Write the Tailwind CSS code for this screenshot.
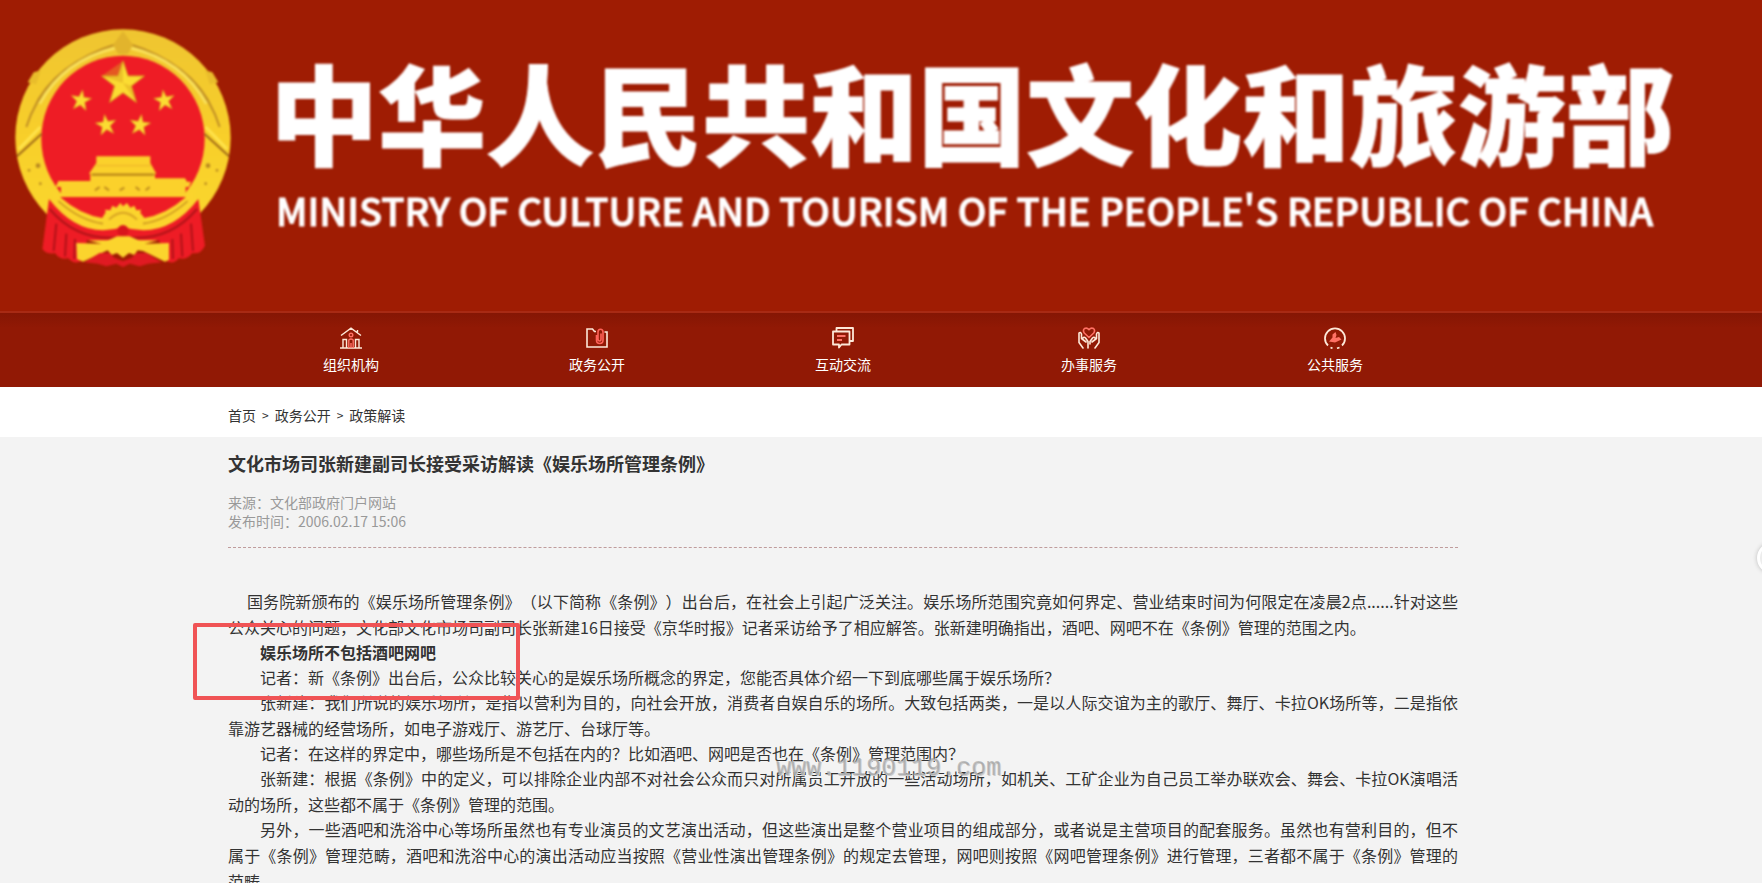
<!DOCTYPE html>
<html lang="zh-CN">
<head>
    <meta charset="UTF-8">
    <meta name="viewport" content="width=device-width, initial-scale=1.0">
    <title>文化市场司张新建副司长接受采访解读《娱乐场所管理条例》</title>
    <script src="https://cdn.jsdelivr.net/npm/@tailwindcss/browser@4"></script>
</head>
<body class="bg-[#f3f3f3] text-[#333] font-['Noto_Sans_CJK_SC',sans-serif] [text-spacing-trim:space-all] overflow-x-hidden">
    <!-- Banner -->
    <header class="bg-[#9f1c03] text-white flex items-start gap-[37px] pl-[13px] h-[313px] border-b-2 border-[#a82a14] whitespace-nowrap overflow-hidden">
        <svg class="mt-[27px] w-[220px] h-[242px] shrink-0 blur-[1px]" viewBox="40 50 660 726" role="img" aria-label="国徽">
            <defs>
                <linearGradient id="gold" x1="0" y1="0" x2="0" y2="1">
                    <stop offset="0" stop-color="#efc531"/>
                    <stop offset=".5" stop-color="#f8cf2a"/>
                    <stop offset="1" stop-color="#fbd92e"/>
                </linearGradient>
                <path id="star" d="M0-66 15-21 64-21 25 9 40 58 0 29-40 58-25 9-64-21-15-21Z"/>
            </defs>
            <!-- wheat ring -->
            <ellipse cx="370" cy="382" rx="323" ry="325" fill="url(#gold)"/>
            <path d="M84 216 102 186 124 180 110 222ZM656 216 638 186 616 180 630 222Z" fill="#e9bd2b"/>
            <path d="M100 300Q160 160 360 98M80 350Q130 190 300 128M640 300Q580 160 380 98M660 350Q610 190 440 128" fill="none" stroke="#c08f25" stroke-width="6"/>
            <path d="M120 280Q190 150 350 112M620 280Q550 150 390 112" fill="none" stroke="#f9e05a" stroke-width="9"/>
            <path d="M340 104 370 62 400 104 384 132H356Z" fill="#e2b42c"/>
            <!-- red field -->
            <ellipse cx="370" cy="386" rx="245" ry="250" fill="#ee1c25"/>
            <path d="M52 438 126 370M688 438 614 370" stroke="#a06a18" stroke-width="6"/>
            <path d="M58 416 122 350M682 416 618 350" stroke="#ffe44d" stroke-width="8"/>
            <g fill="#b98a20">
                <circle cx="115" cy="466" r="7"/><circle cx="625" cy="466" r="7"/>
                <circle cx="88" cy="480" r="4"/><circle cx="652" cy="480" r="4"/>
                <circle cx="122" cy="520" r="4"/><circle cx="618" cy="520" r="4"/>
            </g>
            <!-- stars -->
            <g fill="#fbdc32" stroke="#d9a520" stroke-width="3">
                <use href="#star" transform="translate(370 218)"/>
                <use href="#star" transform="translate(244 270) rotate(8) scale(.48)"/>
                <use href="#star" transform="translate(494 270) rotate(-8) scale(.48)"/>
                <use href="#star" transform="translate(319 344) rotate(-8) scale(.48)"/>
                <use href="#star" transform="translate(421 344) rotate(8) scale(.48)"/>
            </g>
            <path d="M370 152V218L306 197ZM370 218 410 276 395 227Z" fill="#d9a21e" opacity=".45"/>
            <!-- drapery -->
            <path d="M148 566 128 716Q142 734 166 728 180 750 206 744 222 764 246 752L262 690 478 690 500 752Q522 764 538 744 562 750 578 728 602 734 616 706L596 566Q500 690 370 650 244 690 148 566Z" fill="#ee1c25"/>
            <path d="M170 640 162 722M200 670 196 738M226 686 224 746M574 640 580 722M544 670 548 738M518 686 520 746" stroke="#b01218" stroke-width="6"/>
            <path d="M150 596Q230 690 350 682M592 596Q512 690 392 682" fill="none" stroke="#b41419" stroke-width="7"/>
            <path d="M170 560H572L500 620 370 660 240 620Z" fill="#ee1c25"/>
            <!-- gate tower -->
            <path d="M290 438H452V458L470 490H466V504H556L562 514H574L568 530H558V560H184V530H168L176 512H272V490H268L290 458Z" fill="#fbd12b"/>
            <path d="M276 493H464" stroke="#b98518" stroke-width="7"/>
            <path d="M288 466H454" stroke="#f2bd29" stroke-width="5"/>
            <path d="M286 540 300 530M314 530 328 540M360 540 374 532M408 530 420 540M438 540 450 530" stroke="#bf8b1d" stroke-width="6"/>
            <!-- ribbon and gear -->
            <path d="M160 536 184 562Q240 612 312 624H430Q500 612 556 562L580 536 584 570Q510 654 430 654H310Q230 654 158 576Z" fill="#fbd42d"/>
            <path d="M176 572Q240 630 310 640M564 572Q500 630 430 640" fill="none" stroke="#c9941f" stroke-width="5"/>
            <path d="M308 622 318 606 316 598 332 600 338 586 350 592 362 578 370 588 382 578 392 592 404 586 410 600 424 598 422 608 434 622 410 650H330Z" fill="#fbd42d"/>
            <path d="M328 628Q370 586 412 628" fill="none" stroke="#d7a323" stroke-width="6"/>
            <circle cx="370" cy="661" r="17" fill="#d9141c"/>
            <path d="M230 698 302 700 352 678H390L440 700 508 698V748L496 754 430 722 414 720 404 734 388 728 370 742 352 728 336 734 324 720 250 754 232 746Z" fill="#fbd42d"/>
            <path d="M300 728 330 728 344 742 370 752 396 742 410 728 440 728 486 756 446 760 420 768 390 760 370 770 350 760 320 768 294 760 254 756Z" fill="#e01a22"/>
        </svg>
        <div class="mt-[50px] blur-[1px]">
            <h1 class="text-[108px] leading-[120px] font-black [-webkit-text-stroke:1px_white]">中华人民共和国文化和旅游部</h1>
            <p class="ml-[6px] mt-4 text-[38px] leading-[48px] font-medium [-webkit-text-stroke:1px_white]">MINISTRY OF CULTURE AND TOURISM OF THE PEOPLE'S REPUBLIC OF CHINA</p>
        </div>
    </header>

    <!-- Main nav -->
    <nav class="bg-[#8f1805] bg-linear-to-b from-[#851604] from-0% to-[#911905] to-20% text-white text-sm">
        <div class="mx-auto w-[1230px] relative right-[38px] grid grid-cols-5 h-[74px]">
            <a href="#" class="flex flex-col items-center pt-[14px] gap-[5px]">
                <svg class="size-[22px]" viewBox="0 0 22 22" fill="none" stroke="#fde8d8" stroke-width="1.4">
                    <path d="M1 8.500 11 1.200 21 8.500M0 21H22M3 21V12.500H6.500V21M19 21V12.500H15.500V21M17.500 3V6"/>
                    <g stroke="#ff7165"><circle cx="11" cy="8" r="1.800"/><path d="M8.800 21V13Q11 11 13.200 13V21M11 16V21"/></g>
                </svg>
                <span class="leading-5">组织机构</span>
            </a>
            <a href="#" class="flex flex-col items-center pt-[14px] gap-[5px]">
                <svg class="size-[22px]" viewBox="0 0 22 22" fill="none" stroke="#fde8d8" stroke-width="1.600">
                    <path d="M10 4.500H8.500L6.500 2H1V20H21V5H18.500"/>
                    <path stroke="#ff6258" d="M10.500 8V13Q10.500 16.500 13.700 16.500 17 16.500 17 13V5Q17 2.200 14.500 2.200 12 2.200 12 5V12Q12 14 13.700 14 15 14 15 12V6.500"/>
                </svg>
                <span class="leading-5">政务公开</span>
            </a>
            <a href="#" class="flex flex-col items-center pt-[14px] gap-[5px]">
                <svg class="size-[22px]" viewBox="0 0 22 22" fill="none" stroke="#fde8d8" stroke-width="1.800" stroke-linejoin="round">
                    <path d="M4.500 4V1H21V14H18M1 4.500H17.500V17.500H9.500L7 20.500V17.500H1Z"/>
                    <path stroke="#ff7165" d="M5 9H13.500M5 13H10"/>
                </svg>
                <span class="leading-5">互动交流</span>
            </a>
            <a href="#" class="flex flex-col items-center pt-[14px] gap-[5px]">
                <svg class="size-[22px]" viewBox="0 0 22 22" fill="none" stroke="#fde8d8" stroke-width="1.600" stroke-linecap="round" stroke-linejoin="round">
                    <path stroke="#ff7165" d="M11 10.500 6.300 6Q4.500 3.500 6.500 1.500 9 .2 11 2.700 13 .2 15.500 1.500 17.500 3.500 15.700 6Z"/>
                    <path d="M5 21 1 15.500V6Q2.500 4.500 3.500 7V11.500L8 15M5 11Q6 9.500 7.500 11L10 14.500V21M17 21 21 15.500V6Q19.500 4.500 18.500 7V11.500L14 15M17 11Q16 9.500 14.500 11L12 14.500V17"/>
                </svg>
                <span class="leading-5">办事服务</span>
            </a>
            <a href="#" class="flex flex-col items-center pt-[14px] gap-[5px]">
                <svg class="size-[22px]" viewBox="0 0 22 22" fill="none" stroke="#fde8d8" stroke-width="1.800">
                    <path d="M4 18.500A10 10 0 1 1 18 18.500M6.500 20.500 8.500 21.300M13 21.300 15.500 20.500"/>
                    <path d="M11.500 5 8.500 7.500V10.500L5 14.500 11 15.500 17.500 12.500 15 10 11.500 11 12.500 8Z" fill="#ff7165" stroke="none"/>
                </svg>
                <span class="leading-5">公共服务</span>
            </a>
        </div>
    </nav>

    <!-- Breadcrumb -->
    <div class="bg-white">
        <div class="mx-auto w-[1230px] relative right-[38px] h-[50px] pt-[6px] flex items-center gap-[6px] text-sm">
            <a href="#">首页</a><span class="text-xs">&gt;</span><a href="#">政务公开</a><span class="text-xs">&gt;</span><a href="#">政策解读</a>
        </div>
    </div>

    <!-- Article -->
    <main class="mx-auto w-[1230px] relative right-[38px] pt-3">
        <h2 class="text-lg leading-7 font-bold">文化市场司张新建副司长接受采访解读《娱乐场所管理条例》</h2>
        <div class="mt-4 pb-4 text-sm leading-[19px] text-[#999] border-b border-dashed border-[#bf9c9c]">
            <p>来源：文化部政府门户网站</p>
            <p>发布时间：2006.02.17 15:06</p>
        </div>

        <div class="mt-10 text-base leading-[26px] text-justify indent-8 -space-y-px">
            <p class="indent-[19px]">国务院新颁布的《娱乐场所管理条例》（以下简称《条例》）出台后，在社会上引起广泛关注。娱乐场所范围究竟如何界定、营业结束时间为何限定在凌晨2点......针对这些公众关心的问题，文化部文化市场司副司长张新建16日接受《京华时报》记者采访给予了相应解答。张新建明确指出，酒吧、网吧不在《条例》管理的范围之内。</p>
            <p class="font-bold">娱乐场所不包括酒吧网吧</p>
            <p>记者：新《条例》出台后，公众比较关心的是娱乐场所概念的界定，您能否具体介绍一下到底哪些属于娱乐场所？</p>
            <p>张新建：我们所说的娱乐场所，是指以营利为目的，向社会开放，消费者自娱自乐的场所。大致包括两类，一是以人际交谊为主的歌厅、舞厅、卡拉OK场所等，二是指依靠游艺器械的经营场所，如电子游戏厅、游艺厅、台球厅等。</p>
            <p>记者：在这样的界定中，哪些场所是不包括在内的？比如酒吧、网吧是否也在《条例》管理范围内？</p>
            <p>张新建：根据《条例》中的定义，可以排除企业内部不对社会公众而只对所属员工开放的一些活动场所，如机关、工矿企业为自己员工举办联欢会、舞会、卡拉OK演唱活动的场所，这些都不属于《条例》管理的范围。</p>
            <p>另外，一些酒吧和洗浴中心等场所虽然也有专业演员的文艺演出活动，但这些演出是整个营业项目的组成部分，或者说是主营项目的配套服务。虽然也有营利目的，但不属于《条例》管理范畴，酒吧和洗浴中心的演出活动应当按照《营业性演出管理条例》的规定去管理，网吧则按照《网吧管理条例》进行管理，三者都不属于《条例》管理的范畴。</p>
        </div>

        <!-- highlight frame and watermark lie over the text -->
        <div class="absolute -left-[35px] top-[186px] w-[327px] h-[77px] border-4 border-[#f05355] rounded-xs pointer-events-none"></div>
        <div class="absolute left-[548px] top-[316px] text-[25px] leading-8 font-['Liberation_Mono',monospace] text-[#999]/60 [text-shadow:1px_1px_0_#ccc] whitespace-nowrap pointer-events-none">www.1190119.com</div>
    </main>

    <!-- floating side button -->
    <button type="button" aria-label="工具" class="fixed top-[542px] -right-[27px] size-8 rounded-full bg-[#ededed] border-3 border-white shadow-[0_0_4px_#bbb]"></button>
</body>
</html>
